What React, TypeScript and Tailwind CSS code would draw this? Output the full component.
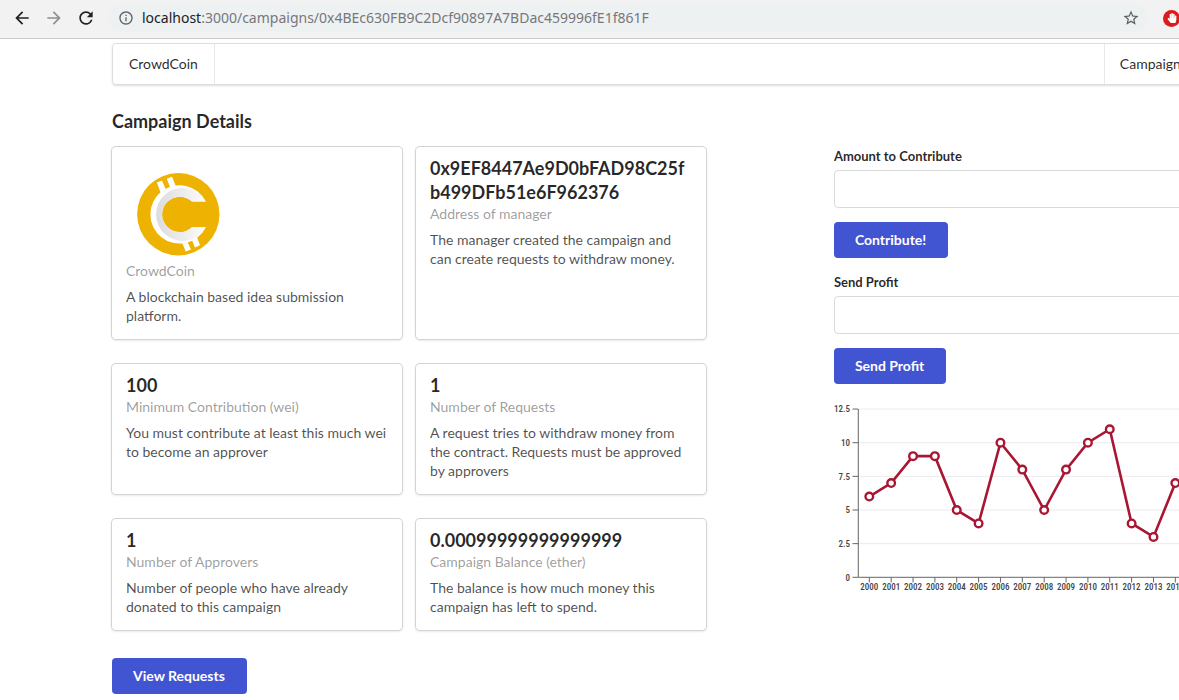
import React from "react";
import {
  MdArrowBack,
  MdArrowForward,
  MdInfoOutline,
  MdRefresh,
  MdStarBorder,
} from "react-icons/md";
import { FaHandPaper } from "react-icons/fa";

function BrowserBar() {
  return (
    <header className="flex h-[39px] items-start border-b border-[#cbcbcb] bg-[#f2f2f2] pt-1 font-['Noto_Sans',sans-serif]">
      <div className="flex h-7 shrink-0 items-center gap-3 pl-3 text-[#202124]">
        <button type="button" aria-label="Back" className="grid size-5 place-items-center">
          <MdArrowBack size={20} />
        </button>
        <button type="button" aria-label="Forward" className="grid size-5 place-items-center text-[#909090]">
          <MdArrowForward size={20} />
        </button>
        <button type="button" aria-label="Reload" className="grid size-5 place-items-center">
          <MdRefresh size={20} />
        </button>
      </div>
      <div className="ml-3 flex h-7 min-w-0 flex-1 items-center rounded-full bg-[#edf1f2] pr-2 pl-2.5">
        <MdInfoOutline size={16} className="shrink-0 text-[#5f6368]" />
        <div className="ml-2 min-w-0 flex-1 truncate text-sm leading-5 text-[#77777c]">
          <span className="text-[#202124]">localhost</span>
          :3000/campaigns/0x4BEc630FB9C2Dcf90897A7BDac459996fE1f861F
        </div>
        <button type="button" aria-label="Bookmark this page" className="grid size-[18px] place-items-center text-[#5a5e63]">
          <MdStarBorder size={18} />
        </button>
      </div>
      <div className="flex h-7 w-[31px] shrink-0 items-center overflow-hidden pl-[15px]">
        <button
          type="button"
          aria-label="Content blocker"
          className="grid size-[17px] shrink-0 place-items-center rounded-full bg-[#dc1c1c] text-white"
        >
          <FaHandPaper size={10} />
        </button>
      </div>
    </header>
  );
}

function CoinLogo() {
  return (
    <svg width="104" height="100" viewBox="126 161 104 100" role="img" aria-label="CrowdCoin logo" className="block">
      <defs>
        <linearGradient id="coin-shade" x1="0" x2="1" y1="0" y2="0">
          <stop offset="0" stopColor="#dcdcdc" />
          <stop offset="1" stopColor="#fbfbfb" />
        </linearGradient>
      </defs>
      <circle cx="178.3" cy="214.2" r="41.2" fill="#eeb202" />
      <g fill="#fff">
        <path d="M156.8 182.6l5.2-2.1 4 9.5-5.4 2.6zM166.8 178.8l5.2-2 4.2 10.2-5.4 2.2z" />
        <path d="M181.6 242.8l5.4-2 4 8.6-5.2 2.2-3.2-7.6zM191.8 239.6l5.4-2 2.8 7.6-5.2 2.2z" />
        <path d="M205.8 201.6A29.2 29.2 0 1 0 205.8 227.2L192 227.2A17.7 17.7 0 1 1 192 201.6Z" />
      </g>
      <path
        d="M205.8 201.6A26.5 26.5 0 1 0 205.8 227.2L192 227.2A17.7 17.7 0 1 1 192 201.6Z"
        fill="url(#coin-shade)"
      />
    </svg>
  );
}

type CardProps = {
  header: React.ReactNode;
  meta: string;
  description: string;
};

function Card({ header, meta, description }: CardProps) {
  return (
    <article className="w-[290px] rounded bg-white p-3.5 text-sm shadow-[0_1px_3px_0_#d4d4d5,0_0_0_1px_#d4d4d5]">
      {typeof header === "string" ? (
        <h4 className="-mt-[5px] text-lg leading-6 font-bold break-words text-black/85">{header}</h4>
      ) : (
        header
      )}
      <p className="leading-5 text-black/40">{meta}</p>
      <p className="mt-1.5 leading-[19px] text-black/70">{description}</p>
    </article>
  );
}

const cards: CardProps[] = [
  {
    header: <CoinLogo />,
    meta: "CrowdCoin",
    description: "A blockchain based idea submission platform.",
  },
  {
    header: "0x9EF8447Ae9D0bFAD98C25fb499DFb51e6F962376",
    meta: "Address of manager",
    description: "The manager created the campaign and can create requests to withdraw money.",
  },
  {
    header: "100",
    meta: "Minimum Contribution (wei)",
    description: "You must contribute at least this much wei to become an approver",
  },
  {
    header: "1",
    meta: "Number of Requests",
    description: "A request tries to withdraw money from the contract. Requests must be approved by approvers",
  },
  {
    header: "1",
    meta: "Number of Approvers",
    description: "Number of people who have already donated to this campaign",
  },
  {
    header: "0.00099999999999999",
    meta: "Campaign Balance (ether)",
    description: "The balance is how much money this campaign has left to spend.",
  },
];

function PrimaryButton({ children }: { children: React.ReactNode }) {
  return (
    <button type="button" className="h-9 rounded bg-[#4154d2] pr-[22px] pl-[21px] text-sm font-bold text-white">
      {children}
    </button>
  );
}

function AmountForm({ id, label, action }: { id: string; label: string; action: string }) {
  return (
    <form className="flex flex-col items-start">
      <label htmlFor={id} className="mb-1 text-[13px] leading-5 font-bold text-black/85">
        {label}
      </label>
      <input
        id={id}
        type="text"
        className="mb-3.5 h-[38px] w-full rounded border border-[#d9dadb] bg-white px-3.5 text-sm"
      />
      <PrimaryButton>{action}</PrimaryButton>
    </form>
  );
}

const values = [6, 7, 9, 9, 5, 4, 10, 8, 5, 8, 10, 11, 4, 3, 7];
const levels = [0, 2.5, 5, 7.5, 10, 12.5];
const pointX = (i: number) => 35.3 + i * 21.86;
const pointY = (v: number) => 179.3 - v * 13.46;

function ProfitChart() {
  return (
    <svg
      width="405"
      height="200"
      viewBox="0 0 405 200"
      role="img"
      aria-label="Profit by year"
      className="block font-['Liberation_Sans_Narrow','Roboto_Condensed',Roboto,sans-serif] text-[9px] font-medium"
    >
      {levels.map((v) => (
        <g key={v}>
          {v > 0 && <line x1="24" x2="405" y1={pointY(v)} y2={pointY(v)} stroke="#ebebeb" />}
          <line x1="18.5" x2="24" y1={pointY(v)} y2={pointY(v)} stroke="#666" />
          <text x="16" y={pointY(v) + 3.2} textAnchor="end" fill="#444">
            {v}
          </text>
        </g>
      ))}
      <path d="M24.3 11V179.3H405" fill="none" stroke="#666" />
      {values.map((_, i) => (
        <g key={i}>
          <line x1={pointX(i)} x2={pointX(i)} y1="179.3" y2="184.5" stroke="#666" />
          <text x={pointX(i)} y="192" textAnchor="middle" fill="#444">
            {2000 + i}
          </text>
        </g>
      ))}
      <polyline
        points={values.map((v, i) => `${pointX(i)},${pointY(v)}`).join(" ")}
        fill="none"
        stroke="#a91633"
        strokeWidth="2.6"
      />
      {values.map((v, i) => (
        <circle key={i} cx={pointX(i)} cy={pointY(v)} r="3.8" fill="#fff" stroke="#a91633" strokeWidth="2.4" />
      ))}
    </svg>
  );
}

export default function App() {
  return (
    <div className="min-h-screen overflow-x-clip bg-white font-[Lato,sans-serif] text-black/85">
      <BrowserBar />
      <div className="-mr-15 ml-28 pt-1">
        <nav className="flex h-[42px] rounded border border-[#dedede] text-sm shadow-[0_1px_2px_0_rgba(34,36,38,0.15)]">
          <a href="#home" className="flex items-center border-r border-[#e8e8e9] px-4">
            CrowdCoin
          </a>
          <div className="ml-auto flex">
            <a href="#campaigns" className="flex items-center border-l border-[#e8e8e9] px-[15px]">
              Campaigns
            </a>
            <a href="#new" className="flex w-9 items-center justify-center border-l border-[#e8e8e9]">
              +
            </a>
          </div>
        </nav>
        <main className="pt-[25px] pb-1.5">
          <h3 className="text-lg leading-[23px] font-bold">Campaign Details</h3>
          <div className="-mx-3.5 mt-[13px] flex">
            <section className="w-5/8 px-3.5 pt-px">
              <div className="flex flex-wrap gap-x-3.5 gap-y-[25px]">
                {cards.map((card) => (
                  <Card key={card.meta} {...card} />
                ))}
              </div>
              <div className="mt-7">
                <PrimaryButton>View Requests</PrimaryButton>
              </div>
            </section>
            <aside className="flex w-3/8 flex-col gap-3.5 px-3.5">
              <AmountForm id="contribution" label="Amount to Contribute" action="Contribute!" />
              <AmountForm id="profit" label="Send Profit" action="Send Profit" />
              <ProfitChart />
            </aside>
          </div>
        </main>
      </div>
    </div>
  );
}
